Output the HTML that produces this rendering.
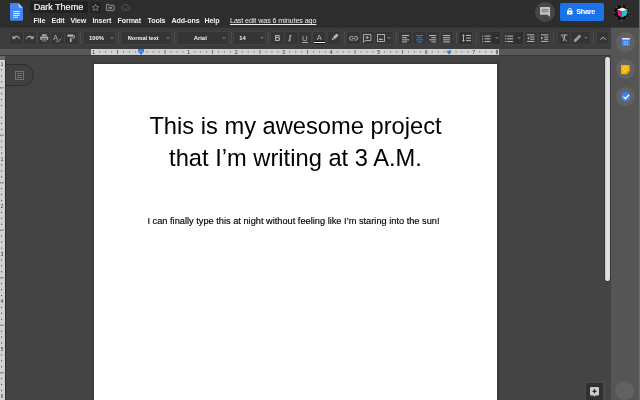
<!DOCTYPE html>
<html>
<head>
<meta charset="utf-8">
<title>Dark Theme</title>
<style>
*{box-sizing:border-box;margin:0;padding:0}
html,body{width:640px;height:400px;overflow:hidden;background:#444;font-family:"Liberation Sans",sans-serif;}
#app{will-change:transform;position:relative;width:640px;height:400px;overflow:hidden;background:#444}
.abs{position:absolute}
svg{overflow:visible}
#header{left:0;top:0;width:640px;height:27.6px;background:#2d2d2d}
#toolbar{left:0;top:28px;width:611px;height:20.5px;box-shadow:0 -0.4px 0 #3c3c3c;background:#3c3c3c}
#rulerrow{left:0;top:48.5px;width:611px;height:7.3px;background:#585858;border-bottom:0.8px solid #383838}
#ruler{left:91px;top:49.2px;width:407.8px;height:5.5px;background:#d2d2d2}
#vruler{left:0;top:60px;width:5.6px;height:340px;background:#d2d2d2;border-right:0.8px solid #2a2a2a}
#vrulertop{left:0;top:55.5px;width:5px;height:4.5px;background:#6a6a6a}
#sidebar{left:611px;top:28px;width:29px;height:372px;box-shadow:0 -0.4px 0 #555;background:#555}
#orange{left:638.8px;top:0;width:1.2px;height:400px;background:#b8570f}
#page{left:94px;top:64px;width:403px;height:336px;background:#fff;box-shadow:0 0 0 1px #3a3a3a,0 0 2px 1.5px rgba(40,40,40,.5)}
#title{left:30px;top:1px;width:57.6px;height:12px;background:#212121;border-radius:1.5px}
#title span{position:absolute;left:3.8px;top:0.7px;font-size:9.1px;line-height:11px;color:#f4f4f4;white-space:nowrap;letter-spacing:-0.05px;-webkit-text-stroke:0.2px #f4f4f4}
.menu{top:17.3px;font-size:7.1px;line-height:8px;color:#f0f0f0;white-space:nowrap;font-weight:bold;letter-spacing:-0.1px}
.tb{top:3.5px;height:12.5px;background:#353535;box-shadow:0 0 0 0.5px #464646;border-radius:1px}
.tbt{font-size:5.9px;font-weight:bold;color:#f0f0f0;white-space:nowrap;line-height:8px;top:5.7px}
.sep{top:4px;width:0.8px;height:11.5px;background:#4c4c4c}
.circ{border-radius:50%}
h1{position:absolute;left:0;width:403px;text-align:center;font-weight:normal;font-size:23.7px;line-height:32px;color:#000;white-space:nowrap}
#body{position:absolute;width:1612px;text-align:center;font-size:36.95px;line-height:48px;color:#000;white-space:nowrap;top:151px;left:-2.3px;transform:scale(0.25);transform-origin:0 0;-webkit-text-stroke:0.6px #000}
</style>
</head>
<body>
<div id="app">
  <div id="header" class="abs">
    <svg class="abs" style="left:10px;top:3.100px" width="13" height="17.800" viewBox="0 0 13.500 18" preserveAspectRatio="none">
      <path d="M1.300 0h7.500l4.700 4.700V16.700a1.300 1.300 0 0 1-1.300 1.300H1.300A1.300 1.300 0 0 1 0 16.700V1.300A1.300 1.300 0 0 1 1.300 0z" fill="#4285f4"/>
      <path d="M8.800 0l4.700 4.700H9.900a1.100 1.100 0 0 1-1.100-1.100z" fill="#a6c5fa"/>
      <rect x="3.300" y="8.200" width="6.900" height="0.950" fill="#f4f4f4"/>
      <rect x="3.300" y="10.100" width="6.900" height="0.950" fill="#f4f4f4"/>
      <rect x="3.300" y="12" width="6.900" height="0.950" fill="#f4f4f4"/>
      <rect x="3.300" y="13.900" width="4.900" height="0.950" fill="#f4f4f4"/>
    </svg>
    <div id="title" class="abs"><span>Dark Theme</span></div>
    <div class="abs" style="left:89.800px;top:1.800px;width:11.200px;height:11.400px;background:#242424;border-radius:1.500px"></div>
    <svg class="abs" style="left:91px;top:2.900px" width="9" height="9" viewBox="0 0 24 24"><path d="M12 3.500l2.600 5.600 6.100 0.700-4.500 4.200 1.200 6-5.400-3-5.400 3 1.200-6L3.300 9.800l6.100-0.700z" fill="none" stroke="#8a8a8a" stroke-width="2.200" stroke-linejoin="round"/></svg>
    <svg class="abs" style="left:105.800px;top:3.600px" width="8.500" height="7" viewBox="0 0 17 14"><path d="M1.800 0.800h4.800l1.600 1.800h7a1 1 0 0 1 1 1v8.600a1 1 0 0 1-1 1H1.800a1 1 0 0 1-1-1V1.800a1 1 0 0 1 1-1z" fill="#3a3a3a" stroke="#9a9a9a" stroke-width="1.700"/><path d="M9 5.200l3.400 2.600L9 10.400zM4.600 7h4.600v1.700H4.600z" fill="#b0b0b0"/></svg>
    <svg class="abs" style="left:120.500px;top:3.800px" width="9.500" height="6.500" viewBox="0 0 19 13"><path d="M5 12.200a4 4 0 0 1-0.600-7.950A5.300 5.300 0 0 1 14.600 5.300 3.500 3.500 0 0 1 14.800 12.200z" fill="none" stroke="#5c5c5c" stroke-width="1.700"/><path d="M7 8.500l2 1.800 3.200-3.400" fill="none" stroke="#5c5c5c" stroke-width="1.400"/></svg>
    <div class="menu abs" style="left:33.500px">File</div>
    <div class="menu abs" style="left:51.500px">Edit</div>
    <div class="menu abs" style="left:70.500px">View</div>
    <div class="menu abs" style="left:92.500px">Insert</div>
    <div class="menu abs" style="left:117.500px">Format</div>
    <div class="menu abs" style="left:147.500px">Tools</div>
    <div class="menu abs" style="left:171.500px">Add-ons</div>
    <div class="menu abs" style="left:204.500px">Help</div>
    <div class="menu abs" style="left:230px;text-decoration:underline;font-weight:normal;font-size:7.200px">Last edit was 6 minutes ago</div>
    <!-- comment button -->
    <div class="abs circ" style="left:535px;top:2px;width:20px;height:20px;background:#474747"></div>
    <svg class="abs" style="left:540px;top:7.200px" width="10" height="10" viewBox="0 0 10 10"><path d="M0.800 0h8.400a0.800 0.800 0 0 1 0.800 0.800V10L7.600 7.700H0.800A0.800 0.800 0 0 1 0 6.900V0.800A0.800 0.800 0 0 1 0.800 0z" fill="#c9c5bd"/><rect x="1.700" y="2.300" width="6.600" height="0.900" fill="#6a6660"/><rect x="1.700" y="4.300" width="6.600" height="0.900" fill="#6a6660"/><rect x="1.700" y="3.200" width="6.600" height="1.100" fill="#a29e97"/></svg>
    <!-- share button -->
    <div class="abs" style="left:559.700px;top:3px;width:44.500px;height:18px;background:#1a73e8;border-radius:2px"></div>
    <svg class="abs" style="left:566.800px;top:8.300px" width="5.600" height="6.600" viewBox="0 0 5.600 6.600"><rect x="0" y="2.500" width="5.600" height="4.100" rx="0.600" fill="#fff"/><path d="M1.300 2.800V1.800a1.500 1.500 0 0 1 3 0v1" fill="none" stroke="#fff" stroke-width="0.900"/><circle cx="2.800" cy="4.600" r="0.700" fill="#1a73e8"/></svg>
    <div class="abs" style="left:576.300px;top:7.300px;font-size:7.300px;font-weight:bold;color:#fff;line-height:9px;letter-spacing:-0.300px;white-space:nowrap">Share</div>
    <!-- avatar -->
    <div class="abs circ" style="left:613.500px;top:4.500px;width:15.600px;height:15.600px;background:#0c0c0c"></div>
    <svg class="abs" style="left:613.500px;top:4.500px" width="15.600" height="15.600" viewBox="0 0 15.600 15.600">
      <g fill="#e8e8e8"><circle cx="7.800" cy="0.700" r="0.500"/><circle cx="7.800" cy="14.900" r="0.500"/><circle cx="0.700" cy="7.800" r="0.500"/><circle cx="14.900" cy="7.800" r="0.500"/><circle cx="2.800" cy="2.800" r="0.450"/><circle cx="12.800" cy="2.800" r="0.450"/><circle cx="2.800" cy="12.800" r="0.450"/><circle cx="12.800" cy="12.800" r="0.450"/></g>
      <path d="M3.200 4.400L8.400 2.400 13.400 4.800 8.200 6.800z" fill="#f2f2f2"/>
      <path d="M2.900 4.500L8.200 6.700 7.600 12.600 4.200 10.200z" fill="#e0197c"/>
      <path d="M8.200 6.700L13.900 4.900 12.500 10.200 7.600 12.600z" fill="#1fc7d6"/>
    </svg>
  </div>
  <div id="toolbar" class="abs">
    <div class="tb abs" style="left:10px;width:12.5px;"></div>
    <div class="tb abs" style="left:23.75px;width:12.5px;"></div>
    <div class="tb abs" style="left:37.5px;width:12.5px;"></div>
    <div class="tb abs" style="left:51.25px;width:12.5px;"></div>
    <div class="tb abs" style="left:65px;width:12.5px;"></div>
    <svg class="abs" style="left:12.2px;top:6.8px" width="8" height="6" viewBox="0 0 8 6"><path d="M0.6 0.8v3h3L2.5 2.7C3.3 2.1 4.2 1.9 5 2c1.300.2 2.200 1 2.600 2.300l0.400-0.200C7.600 2.200 6.300 1 4.800 0.900 3.600 0.800 2.500 1.200 1.700 1.900z" fill="#b4b4b4" stroke="#b4b4b4" stroke-width="0.250"/></svg>
    <svg class="abs" style="left:25.95px;top:6.8px" width="8" height="6" viewBox="0 0 8 6"><g transform="translate(8,0) scale(-1,1)"><path d="M0.6 0.8v3h3L2.5 2.7C3.3 2.1 4.2 1.9 5 2c1.300.2 2.200 1 2.600 2.300l0.400-0.200C7.600 2.200 6.300 1 4.800 0.900 3.600 0.800 2.500 1.200 1.700 1.900z" fill="#b4b4b4" stroke="#b4b4b4" stroke-width="0.250"/></g></svg>
    <svg class="abs" style="left:39.5px;top:5.8px" width="8.5" height="8" viewBox="0 0 8.5 8"><rect x="2" y="0.300" width="4.500" height="1.600" fill="#b4b4b4"/><rect x="0.300" y="2.400" width="7.900" height="3.600" rx="0.800" fill="#b4b4b4"/><rect x="2" y="4.600" width="4.500" height="3" fill="#b4b4b4" stroke="#343434" stroke-width="0.600"/><rect x="2.600" y="5.300" width="3.300" height="1.600" fill="#555"/></svg>
    <svg class="abs" style="left:53.3px;top:5.6px" width="9" height="8.5" viewBox="0 0 9 8.5"><text x="0.300" y="5.600" font-family="Liberation Sans, sans-serif" font-size="7" fill="#b4b4b4">A</text><path d="M3.200 6.600l1.500 1.400 3.200-3.300" fill="none" stroke="#b4b4b4" stroke-width="0.900"/></svg>
    <svg class="abs" style="left:67.3px;top:5.8px" width="8" height="8.5" viewBox="0 0 8 8.5"><rect x="0.400" y="0.400" width="5.800" height="2.400" rx="0.400" fill="#b4b4b4"/><path d="M6.200 1.500h1.200v2.600H3.700v1.200" fill="none" stroke="#b4b4b4" stroke-width="0.800"/><rect x="2.900" y="4.800" width="1.700" height="3.200" fill="#b4b4b4"/></svg>
    <div class="sep abs" style="left:80px"></div>
    <div class="tb abs" style="left:83.75px;width:31px;"></div>
    <div class="tbt abs" style="left:89px">100%</div>
    <svg class="abs" style="left:109.5px;top:8.6px" width="4" height="2.2" viewBox="0 0 4 2.2"><path d="M0 0h4L2 2.2z" fill="#6c6c6c"/></svg>
    <div class="sep abs" style="left:117.5px"></div>
    <div class="tb abs" style="left:120.6px;width:50.6px;"></div>
    <div class="tbt abs" style="left:127.700px;font-size:5.650px">Normal text</div>
    <svg class="abs" style="left:165.5px;top:8.6px" width="4" height="2.2" viewBox="0 0 4 2.2"><path d="M0 0h4L2 2.2z" fill="#6c6c6c"/></svg>
    <div class="sep abs" style="left:174.2px"></div>
    <div class="tb abs" style="left:177.5px;width:50.2px;"></div>
    <div class="tbt abs" style="left:193.700px">Arial</div>
    <svg class="abs" style="left:222.4px;top:8.6px" width="4" height="2.2" viewBox="0 0 4 2.2"><path d="M0 0h4L2 2.2z" fill="#6c6c6c"/></svg>
    <div class="sep abs" style="left:231px"></div>
    <div class="tb abs" style="left:233.75px;width:31.2px;"></div>
    <div class="tbt abs" style="left:239.300px">14</div>
    <svg class="abs" style="left:259.9px;top:8.6px" width="4" height="2.2" viewBox="0 0 4 2.2"><path d="M0 0h4L2 2.2z" fill="#6c6c6c"/></svg>
    <div class="sep abs" style="left:268px"></div>
    <div class="tb abs" style="left:271.25px;width:12.5px;"></div>
    <div class="tb abs" style="left:285px;width:12.5px;"></div>
    <div class="tb abs" style="left:298.75px;width:12.5px;"></div>
    <div class="tb abs" style="left:312.5px;width:12.5px;"></div>
    <div class="tb abs" style="left:327.5px;width:12.5px;"></div>
    <div class="abs" style="left:274.600px;top:6px;font-size:8.400px;font-weight:bold;color:#b4b4b4;line-height:9px">B</div>
    <div class="abs" style="left:288.200px;top:5.800px;font-size:9.200px;font-style:italic;font-family:'Liberation Serif',serif;font-weight:normal;-webkit-text-stroke:0.250px #b4b4b4;color:#b4b4b4;line-height:9px">I</div>
    <div class="abs" style="left:302px;top:5.800px;font-size:8px;color:#b4b4b4;line-height:9px">U</div>
    <div class="abs" style="left:302.200px;top:13.600px;width:5.600px;height:0.800px;background:#b4b4b4"></div>
    <div class="abs" style="left:316.800px;top:4.600px;font-size:7.600px;color:#b4b4b4;line-height:9px">A</div>
    <div class="abs" style="left:314px;top:12.800px;width:11px;height:3.500px;background:#fff;border-top:0.700px solid #111;border-bottom:0.300px solid #111"></div>
    <svg class="abs" style="left:330.6px;top:5.4px" width="8" height="8" viewBox="0 0 8 8"><path d="M5.600 0.400l2 2L3.800 6.200l-2-2z" fill="#b4b4b4"/><path d="M1.400 4.800l1.800 1.800-2.500 0.700z" fill="#b4b4b4"/></svg>
    <div class="sep abs" style="left:344px"></div>
    <div class="tb abs" style="left:347.25px;width:12.5px;"></div>
    <svg class="abs" style="left:349px;top:7.6px" width="9.2" height="4.6" viewBox="0 0 9.2 4.6"><path d="M3.900 0.500H2.300a1.800 1.800 0 0 0 0 3.600h1.600M5.300 0.500h1.600a1.800 1.800 0 0 1 0 3.600H5.300" fill="none" stroke="#b4b4b4" stroke-width="0.950"/><rect x="2.800" y="1.850" width="3.600" height="0.900" fill="#b4b4b4"/></svg>
    <div class="tb abs" style="left:361.25px;width:12.5px;"></div>
    <svg class="abs" style="left:363.4px;top:5.6px" width="8.5" height="9" viewBox="0 0 8.5 9"><path d="M0.500 0.500h7.400v6H2.400L0.500 8.300z" fill="none" stroke="#b4b4b4" stroke-width="0.900"/><path d="M4.200 1.900v3.200M2.600 3.500h3.200" stroke="#b4b4b4" stroke-width="0.900"/></svg>
    <div class="tb abs" style="left:375.25px;width:17.5px;"></div>
    <svg class="abs" style="left:377.3px;top:5.8px" width="8" height="8" viewBox="0 0 8 8"><rect x="0.500" y="0.500" width="7" height="7" fill="none" stroke="#b4b4b4" stroke-width="0.900"/><path d="M1.600 6l1.500-1.900 1 1.200 0.900-0.700 1.400 1.400z" fill="#b4b4b4"/></svg>
    <svg class="abs" style="left:387.4px;top:8.6px" width="4" height="2.2" viewBox="0 0 4 2.2"><path d="M0 0h4L2 2.2z" fill="#6c6c6c"/></svg>
    <div class="sep abs" style="left:396.2px"></div>
    <div class="tb abs" style="left:399.4px;width:12.5px;"></div>
    <div class="tb abs" style="left:413.1px;width:12.5px;"></div>
    <div class="tb abs" style="left:426.8px;width:12.5px;"></div>
    <div class="tb abs" style="left:440.5px;width:12.5px;"></div>
    <svg class="abs" style="left:401.9px;top:6.7px" width="7.5" height="8" viewBox="0 0 7.5 8"><rect x="0" y="0.0" width="7.2" height="1.050" fill="#b4b4b4"/><rect x="0" y="2.15" width="5" height="1.050" fill="#b4b4b4"/><rect x="0" y="4.3" width="7.2" height="1.050" fill="#b4b4b4"/><rect x="0" y="6.449999999999999" width="5" height="1.050" fill="#b4b4b4"/></svg>
    <svg class="abs" style="left:415.6px;top:6.7px" width="7.5" height="8" viewBox="0 0 7.5 8"><rect x="0" y="0.0" width="7.2" height="1.050" fill="#2a7de8"/><rect x="1.3" y="2.15" width="4.6" height="1.050" fill="#2a7de8"/><rect x="0" y="4.3" width="7.2" height="1.050" fill="#2a7de8"/><rect x="1.3" y="6.449999999999999" width="4.6" height="1.050" fill="#2a7de8"/></svg>
    <svg class="abs" style="left:429.3px;top:6.7px" width="7.5" height="8" viewBox="0 0 7.5 8"><rect x="0" y="0.0" width="7.2" height="1.050" fill="#b4b4b4"/><rect x="2.2" y="2.15" width="5" height="1.050" fill="#b4b4b4"/><rect x="0" y="4.3" width="7.2" height="1.050" fill="#b4b4b4"/><rect x="2.2" y="6.449999999999999" width="5" height="1.050" fill="#b4b4b4"/></svg>
    <svg class="abs" style="left:443px;top:6.7px" width="7.5" height="8" viewBox="0 0 7.5 8"><rect x="0" y="0.0" width="7.2" height="1.050" fill="#b4b4b4"/><rect x="0" y="2.15" width="7.2" height="1.050" fill="#b4b4b4"/><rect x="0" y="4.3" width="7.2" height="1.050" fill="#b4b4b4"/><rect x="0" y="6.449999999999999" width="7.2" height="1.050" fill="#b4b4b4"/></svg>
    <div class="sep abs" style="left:456.3px"></div>
    <div class="tb abs" style="left:459.4px;width:13px;background:#2f2f2f;"></div>
    <svg class="abs" style="left:461.6px;top:6.2px" width="9" height="8.5" viewBox="0 0 9 8.5"><path d="M1.500 0l1.500 1.800H2v4.400h1L1.500 8 0 6.200h1V1.800H0z" fill="#b4b4b4"/><rect x="4" y="0.900" width="5" height="1.050" fill="#b4b4b4"/><rect x="4" y="3.500" width="5" height="1.050" fill="#b4b4b4"/><rect x="4" y="6.100" width="5" height="1.050" fill="#b4b4b4"/></svg>
    <div class="sep abs" style="left:476.2px"></div>
    <div class="tb abs" style="left:480px;width:20px;"></div>
    <div class="abs" style="left:492px;top:3.500px;width:8px;height:12.500px;background:#2f2f2f"></div>
    <svg class="abs" style="left:482.3px;top:6.6px" width="9" height="8" viewBox="0 0 9 8"><rect x="0.200" y="0.200" width="0.900" height="1.800" fill="#999"/><rect x="0.200" y="2.900" width="0.900" height="1.800" fill="#999"/><rect x="0.200" y="5.600" width="0.900" height="1.800" fill="#999"/><rect x="2.500" y="0.600" width="5.800" height="1.050" fill="#b4b4b4"/><rect x="2.500" y="3.300" width="5.800" height="1.050" fill="#b4b4b4"/><rect x="2.500" y="6" width="5.800" height="1.050" fill="#b4b4b4"/></svg>
    <svg class="abs" style="left:494.5px;top:8.6px" width="4" height="2.2" viewBox="0 0 4 2.2"><path d="M0 0h4L2 2.2z" fill="#6c6c6c"/></svg>
    <div class="tb abs" style="left:502.75px;width:19.75px;"></div>
    <div class="abs" style="left:514.500px;top:3.500px;width:8px;height:12.500px;background:#2f2f2f"></div>
    <svg class="abs" style="left:505px;top:6.6px" width="9" height="8" viewBox="0 0 9 8"><rect x="0" y="0.500" width="1.300" height="1.200" fill="#aaa"/><rect x="0" y="3.200" width="1.300" height="1.200" fill="#aaa"/><rect x="0" y="5.900" width="1.300" height="1.200" fill="#aaa"/><rect x="2.200" y="0.600" width="5.800" height="1.050" fill="#b4b4b4"/><rect x="2.200" y="3.300" width="5.800" height="1.050" fill="#b4b4b4"/><rect x="2.200" y="6" width="5.800" height="1.050" fill="#b4b4b4"/></svg>
    <svg class="abs" style="left:517px;top:8.6px" width="4" height="2.2" viewBox="0 0 4 2.2"><path d="M0 0h4L2 2.2z" fill="#6c6c6c"/></svg>
    <div class="tb abs" style="left:525px;width:11.5px;"></div>
    <svg class="abs" style="left:527px;top:6.3px" width="8" height="8.5" viewBox="0 0 8 8.5"><rect x="0" y="0.300" width="7.400" height="1.050" fill="#b4b4b4"/><rect x="3.200" y="2.500" width="4.200" height="1.050" fill="#b4b4b4"/><rect x="3.200" y="4.700" width="4.200" height="1.050" fill="#b4b4b4"/><rect x="0" y="6.900" width="7.400" height="1.050" fill="#b4b4b4"/><path d="M2.200 2.500v3.200L0.200 4.100z" fill="#b4b4b4"/></svg>
    <div class="tb abs" style="left:538.75px;width:11.5px;"></div>
    <svg class="abs" style="left:540.8px;top:6.3px" width="8" height="8.5" viewBox="0 0 8 8.5"><rect x="0" y="0.300" width="7.400" height="1.050" fill="#b4b4b4"/><rect x="3.200" y="2.500" width="4.200" height="1.050" fill="#b4b4b4"/><rect x="3.200" y="4.700" width="4.200" height="1.050" fill="#b4b4b4"/><rect x="0" y="6.900" width="7.400" height="1.050" fill="#b4b4b4"/><path d="M0.200 2.500v3.200L2.200 4.100z" fill="#b4b4b4"/></svg>
    <div class="sep abs" style="left:553px"></div>
    <div class="tb abs" style="left:557.5px;width:12.5px;"></div>
    <svg class="abs" style="left:559.8px;top:5.8px" width="8" height="8.5" viewBox="0 0 8 8.5"><path d="M1.800 1h5.600M4.900 1L3.600 7" stroke="#b4b4b4" stroke-width="1" fill="none"/><path d="M0.800 1.200l6 6" stroke="#b4b4b4" stroke-width="0.900"/></svg>
    <div class="tb abs" style="left:571.25px;width:18.75px;"></div>
    <svg class="abs" style="left:573.3px;top:5.6px" width="9" height="9" viewBox="0 0 9 9"><path d="M6.400 0.600l1.800 1.800-5 5-2.400 0.700 0.600-2.500z" fill="#a4a4a4"/><path d="M5.200 2.600l1.200 1.200M3.600 4.200l1.200 1.200" stroke="#555" stroke-width="0.500"/></svg>
    <svg class="abs" style="left:584px;top:8.6px" width="4" height="2.2" viewBox="0 0 4 2.2"><path d="M0 0h4L2 2.2z" fill="#6c6c6c"/></svg>
    <div class="sep abs" style="left:593px"></div>
    <div class="tb abs" style="left:596.8px;width:11.5px;"></div>
    <svg class="abs" style="left:599.5px;top:7.5px" width="6.5" height="4.5" viewBox="0 0 6.5 4.5"><path d="M0.500 3.800L3.200 1l2.700 2.800" fill="none" stroke="#b4b4b4" stroke-width="1"/></svg>
  </div>
  <div id="rulerrow" class="abs"></div>
  <div id="ruler" class="abs"><svg class="abs" style="left:0;top:0" width="408" height="6" viewBox="0 0 408 6"><text x="2.80" y="4.500" font-size="5.200" text-anchor="middle" fill="#333" font-family="Liberation Sans, sans-serif">1</text><rect x="8.29" y="1.700" width="0.900" height="2.200" fill="#909090"/><rect x="14.23" y="1.700" width="0.900" height="2.200" fill="#909090"/><rect x="20.16" y="1.700" width="0.900" height="2.200" fill="#909090"/><rect x="26.15" y="0.900" width="0.800" height="3.800" fill="#555"/><rect x="32.04" y="1.700" width="0.900" height="2.200" fill="#909090"/><rect x="37.98" y="1.700" width="0.900" height="2.200" fill="#909090"/><rect x="43.91" y="1.700" width="0.900" height="2.200" fill="#909090"/><rect x="55.79" y="1.700" width="0.900" height="2.200" fill="#909090"/><rect x="61.73" y="1.700" width="0.900" height="2.200" fill="#909090"/><rect x="67.66" y="1.700" width="0.900" height="2.200" fill="#909090"/><rect x="73.65" y="0.900" width="0.800" height="3.800" fill="#555"/><rect x="79.54" y="1.700" width="0.900" height="2.200" fill="#909090"/><rect x="85.48" y="1.700" width="0.900" height="2.200" fill="#909090"/><rect x="91.41" y="1.700" width="0.900" height="2.200" fill="#909090"/><text x="97.80" y="4.500" font-size="5.200" text-anchor="middle" fill="#333" font-family="Liberation Sans, sans-serif">1</text><rect x="103.29" y="1.700" width="0.900" height="2.200" fill="#909090"/><rect x="109.23" y="1.700" width="0.900" height="2.200" fill="#909090"/><rect x="115.16" y="1.700" width="0.900" height="2.200" fill="#909090"/><rect x="121.15" y="0.900" width="0.800" height="3.800" fill="#555"/><rect x="127.04" y="1.700" width="0.900" height="2.200" fill="#909090"/><rect x="132.98" y="1.700" width="0.900" height="2.200" fill="#909090"/><rect x="138.91" y="1.700" width="0.900" height="2.200" fill="#909090"/><text x="145.30" y="4.500" font-size="5.200" text-anchor="middle" fill="#333" font-family="Liberation Sans, sans-serif">2</text><rect x="150.79" y="1.700" width="0.900" height="2.200" fill="#909090"/><rect x="156.73" y="1.700" width="0.900" height="2.200" fill="#909090"/><rect x="162.66" y="1.700" width="0.900" height="2.200" fill="#909090"/><rect x="168.65" y="0.900" width="0.800" height="3.800" fill="#555"/><rect x="174.54" y="1.700" width="0.900" height="2.200" fill="#909090"/><rect x="180.48" y="1.700" width="0.900" height="2.200" fill="#909090"/><rect x="186.41" y="1.700" width="0.900" height="2.200" fill="#909090"/><text x="192.80" y="4.500" font-size="5.200" text-anchor="middle" fill="#333" font-family="Liberation Sans, sans-serif">3</text><rect x="198.29" y="1.700" width="0.900" height="2.200" fill="#909090"/><rect x="204.23" y="1.700" width="0.900" height="2.200" fill="#909090"/><rect x="210.16" y="1.700" width="0.900" height="2.200" fill="#909090"/><rect x="216.15" y="0.900" width="0.800" height="3.800" fill="#555"/><rect x="222.04" y="1.700" width="0.900" height="2.200" fill="#909090"/><rect x="227.98" y="1.700" width="0.900" height="2.200" fill="#909090"/><rect x="233.91" y="1.700" width="0.900" height="2.200" fill="#909090"/><text x="240.30" y="4.500" font-size="5.200" text-anchor="middle" fill="#333" font-family="Liberation Sans, sans-serif">4</text><rect x="245.79" y="1.700" width="0.900" height="2.200" fill="#909090"/><rect x="251.73" y="1.700" width="0.900" height="2.200" fill="#909090"/><rect x="257.66" y="1.700" width="0.900" height="2.200" fill="#909090"/><rect x="263.65" y="0.900" width="0.800" height="3.800" fill="#555"/><rect x="269.54" y="1.700" width="0.900" height="2.200" fill="#909090"/><rect x="275.48" y="1.700" width="0.900" height="2.200" fill="#909090"/><rect x="281.41" y="1.700" width="0.900" height="2.200" fill="#909090"/><text x="287.80" y="4.500" font-size="5.200" text-anchor="middle" fill="#333" font-family="Liberation Sans, sans-serif">5</text><rect x="293.29" y="1.700" width="0.900" height="2.200" fill="#909090"/><rect x="299.23" y="1.700" width="0.900" height="2.200" fill="#909090"/><rect x="305.16" y="1.700" width="0.900" height="2.200" fill="#909090"/><rect x="311.15" y="0.900" width="0.800" height="3.800" fill="#555"/><rect x="317.04" y="1.700" width="0.900" height="2.200" fill="#909090"/><rect x="322.98" y="1.700" width="0.900" height="2.200" fill="#909090"/><rect x="328.91" y="1.700" width="0.900" height="2.200" fill="#909090"/><text x="335.30" y="4.500" font-size="5.200" text-anchor="middle" fill="#333" font-family="Liberation Sans, sans-serif">6</text><rect x="340.79" y="1.700" width="0.900" height="2.200" fill="#909090"/><rect x="346.73" y="1.700" width="0.900" height="2.200" fill="#909090"/><rect x="352.66" y="1.700" width="0.900" height="2.200" fill="#909090"/><rect x="358.65" y="0.900" width="0.800" height="3.800" fill="#555"/><rect x="364.54" y="1.700" width="0.900" height="2.200" fill="#909090"/><rect x="370.48" y="1.700" width="0.900" height="2.200" fill="#909090"/><rect x="376.41" y="1.700" width="0.900" height="2.200" fill="#909090"/><text x="382.80" y="4.500" font-size="5.200" text-anchor="middle" fill="#333" font-family="Liberation Sans, sans-serif">7</text><rect x="388.29" y="1.700" width="0.900" height="2.200" fill="#909090"/><rect x="394.23" y="1.700" width="0.900" height="2.200" fill="#909090"/><rect x="400.16" y="1.700" width="0.900" height="2.200" fill="#909090"/><rect x="406.15" y="0.900" width="0.800" height="3.800" fill="#555"/><rect x="405.400" y="0.800" width="0.800" height="4.600" fill="#444"/></svg><svg class="abs" style="left:47.30000000000001px;top:-0.2px" width="6" height="6" viewBox="0 0 6 6"><path d="M0 0h6v2.600L3 6 0 2.600z" fill="#2b7de9"/><rect x="1.200" y="1.900" width="3.600" height="0.600" fill="#7fb2f5"/></svg><svg class="abs" style="left:355.3px;top:-0.2px" width="6" height="6" viewBox="0 0 6 6"><path d="M0.300 1.800h5.400L3 5.800z" fill="#2b7de9"/></svg></div>
  <!-- outline pill -->
  <div class="abs" style="left:-12px;top:64px;width:46px;height:21.500px;border-radius:10.750px;background:#404040;border:0.800px solid #2c2c2c"></div>
  <svg class="abs" style="left:15px;top:71px" width="9" height="9" viewBox="0 0 9 9"><rect x="0.400" y="0.400" width="8.200" height="8.200" fill="none" stroke="#7e7e7e" stroke-width="0.800"/><rect x="2" y="2.200" width="5" height="0.800" fill="#7e7e7e"/><rect x="2" y="4.100" width="5" height="0.800" fill="#7e7e7e"/><rect x="2" y="6" width="5" height="0.800" fill="#7e7e7e"/></svg>
  <div id="vrulertop" class="abs"></div>
  <div id="vruler" class="abs"><svg class="abs" style="left:0;top:0" width="5" height="340" viewBox="0 0 5 340"><text x="2" y="5.60" font-size="4.600" text-anchor="middle" fill="#333" font-family="Liberation Sans, sans-serif">1</text><rect x="1" y="9.44" width="1.100" height="1" fill="#4a4a4a"/><rect x="1" y="15.38" width="1.100" height="1" fill="#4a4a4a"/><rect x="1" y="21.31" width="1.100" height="1" fill="#4a4a4a"/><rect x="0" y="27.10" width="3.800" height="1.300" fill="#8a8a8a"/><rect x="1" y="33.19" width="1.100" height="1" fill="#4a4a4a"/><rect x="1" y="39.12" width="1.100" height="1" fill="#4a4a4a"/><rect x="1" y="45.06" width="1.100" height="1" fill="#4a4a4a"/><rect x="1" y="56.94" width="1.100" height="1" fill="#4a4a4a"/><rect x="1" y="62.88" width="1.100" height="1" fill="#4a4a4a"/><rect x="1" y="68.81" width="1.100" height="1" fill="#4a4a4a"/><rect x="0" y="74.60" width="3.800" height="1.300" fill="#8a8a8a"/><rect x="1" y="80.69" width="1.100" height="1" fill="#4a4a4a"/><rect x="1" y="86.62" width="1.100" height="1" fill="#4a4a4a"/><rect x="1" y="92.56" width="1.100" height="1" fill="#4a4a4a"/><text x="2" y="100.60" font-size="4.600" text-anchor="middle" fill="#333" font-family="Liberation Sans, sans-serif">1</text><rect x="1" y="104.44" width="1.100" height="1" fill="#4a4a4a"/><rect x="1" y="110.38" width="1.100" height="1" fill="#4a4a4a"/><rect x="1" y="116.31" width="1.100" height="1" fill="#4a4a4a"/><rect x="0" y="122.10" width="3.800" height="1.300" fill="#8a8a8a"/><rect x="1" y="128.19" width="1.100" height="1" fill="#4a4a4a"/><rect x="1" y="134.12" width="1.100" height="1" fill="#4a4a4a"/><rect x="1" y="140.06" width="1.100" height="1" fill="#4a4a4a"/><text x="2" y="148.10" font-size="4.600" text-anchor="middle" fill="#333" font-family="Liberation Sans, sans-serif">2</text><rect x="1" y="151.94" width="1.100" height="1" fill="#4a4a4a"/><rect x="1" y="157.88" width="1.100" height="1" fill="#4a4a4a"/><rect x="1" y="163.81" width="1.100" height="1" fill="#4a4a4a"/><rect x="0" y="169.60" width="3.800" height="1.300" fill="#8a8a8a"/><rect x="1" y="175.69" width="1.100" height="1" fill="#4a4a4a"/><rect x="1" y="181.62" width="1.100" height="1" fill="#4a4a4a"/><rect x="1" y="187.56" width="1.100" height="1" fill="#4a4a4a"/><text x="2" y="195.60" font-size="4.600" text-anchor="middle" fill="#333" font-family="Liberation Sans, sans-serif">3</text><rect x="1" y="199.44" width="1.100" height="1" fill="#4a4a4a"/><rect x="1" y="205.38" width="1.100" height="1" fill="#4a4a4a"/><rect x="1" y="211.31" width="1.100" height="1" fill="#4a4a4a"/><rect x="0" y="217.10" width="3.800" height="1.300" fill="#8a8a8a"/><rect x="1" y="223.19" width="1.100" height="1" fill="#4a4a4a"/><rect x="1" y="229.12" width="1.100" height="1" fill="#4a4a4a"/><rect x="1" y="235.06" width="1.100" height="1" fill="#4a4a4a"/><text x="2" y="243.10" font-size="4.600" text-anchor="middle" fill="#333" font-family="Liberation Sans, sans-serif">4</text><rect x="1" y="246.94" width="1.100" height="1" fill="#4a4a4a"/><rect x="1" y="252.88" width="1.100" height="1" fill="#4a4a4a"/><rect x="1" y="258.81" width="1.100" height="1" fill="#4a4a4a"/><rect x="0" y="264.60" width="3.800" height="1.300" fill="#8a8a8a"/><rect x="1" y="270.69" width="1.100" height="1" fill="#4a4a4a"/><rect x="1" y="276.62" width="1.100" height="1" fill="#4a4a4a"/><rect x="1" y="282.56" width="1.100" height="1" fill="#4a4a4a"/><text x="2" y="290.60" font-size="4.600" text-anchor="middle" fill="#333" font-family="Liberation Sans, sans-serif">5</text><rect x="1" y="294.44" width="1.100" height="1" fill="#4a4a4a"/><rect x="1" y="300.38" width="1.100" height="1" fill="#4a4a4a"/><rect x="1" y="306.31" width="1.100" height="1" fill="#4a4a4a"/><rect x="0" y="312.10" width="3.800" height="1.300" fill="#8a8a8a"/><rect x="1" y="318.19" width="1.100" height="1" fill="#4a4a4a"/><rect x="1" y="324.12" width="1.100" height="1" fill="#4a4a4a"/><rect x="1" y="330.06" width="1.100" height="1" fill="#4a4a4a"/><text x="2" y="338.10" font-size="4.600" text-anchor="middle" fill="#333" font-family="Liberation Sans, sans-serif">6</text></svg></div>
  <div id="page" class="abs">
    <h1 style="top:46px">This is my awesome project</h1>
    <h1 style="top:78px">that I’m writing at 3 A.M.</h1>
    <div id="body">I can finally type this at night without feeling like I’m staring into the sun!</div>
  </div>
  <!-- scrollbar -->
  <div class="abs" style="left:605px;top:57.300px;width:4.600px;height:224px;border-radius:2.300px;background:linear-gradient(90deg,#c4c4c8,#e6e6ea 45%,#d8d8dc);box-shadow:0 0 0 0.600px #303030"></div>
  <!-- explore button -->
  <div class="abs" style="left:586px;top:383.200px;width:17px;height:17px;background:#303030;box-shadow:0 0 3px 1.500px rgba(90,90,90,.45)"></div>
  <svg class="abs" style="left:590.200px;top:387.300px" width="9" height="10" viewBox="0 0 9 10"><path d="M1 0h7a1 1 0 0 1 1 1v6.600a1 1 0 0 1-1 1H5.500L4.500 9.700 3.500 8.600H1a1 1 0 0 1-1-1V1a1 1 0 0 1 1-1z" fill="#cbcbcb"/><path d="M4.500 1.600l0.800 1.900 1.900 0.800-1.900 0.800-0.800 1.900-0.800-1.900-1.900-0.800 1.900-0.800z" fill="#222"/></svg>
  <div id="sidebar" class="abs">
    <div class="abs circ" style="left:4.700px;top:4.300px;width:19.400px;height:19.400px;background:#616161"></div>
    <div class="abs circ" style="left:4.700px;top:31.300px;width:19.400px;height:19.400px;background:#616161"></div>
    <div class="abs circ" style="left:4.700px;top:58.600px;width:19.400px;height:19.400px;background:#616161"></div>
    <!-- calendar -->
    <svg class="abs" style="left:10.500px;top:10px" width="7.800" height="8" viewBox="0 0 7.800 8"><rect x="0" y="0" width="7.800" height="8" rx="0.500" fill="#3f7ff0"/><rect x="0" y="0" width="7.800" height="1.500" fill="#e9eef8"/><text x="3.900" y="6.600" font-size="4.800" font-weight="bold" text-anchor="middle" fill="#9cc0ff" font-family="Liberation Sans, sans-serif">31</text></svg>
    <!-- keep -->
    <svg class="abs" style="left:10.200px;top:36.600px" width="8.600" height="9.200" viewBox="0 0 8.600 9.200"><path d="M0.600 0h7.400a0.600 0.600 0 0 1 0.600 0.600V6.600L6 9.200H0.600A0.600 0.600 0 0 1 0 8.600V0.600A0.600 0.600 0 0 1 0.600 0z" fill="#f5b400"/><path d="M8.600 6.600L6 9.200V7.200a0.600 0.600 0 0 1 0.600-0.600z" fill="#c98f00"/><circle cx="4.300" cy="3.700" r="1.900" fill="none" stroke="#fbd66b" stroke-width="0.800"/><rect x="3.500" y="5.900" width="1.600" height="1.300" fill="#fbd66b"/></svg>
    <!-- tasks -->
    <svg class="abs" style="left:9.700px;top:63.600px" width="9.400" height="9.400" viewBox="0 0 9.400 9.400"><circle cx="4.700" cy="4.700" r="4.700" fill="#3b82f6"/><path d="M3.300 5.600l1.200 1.200 3.200-3.700" fill="none" stroke="#fff" stroke-width="1.400" stroke-linecap="round"/><circle cx="2.400" cy="4.700" r="0.800" fill="#f6c333"/></svg>
    <!-- collapse circle -->
    <div class="abs circ" style="left:4.100px;top:353.200px;width:19.200px;height:19.200px;background:#616161"></div>
    <svg class="abs" style="left:11.500px;top:359.800px" width="4.500" height="6" viewBox="0 0 4.500 6"><path d="M1 0.600l2.500 2.400-2.500 2.400" fill="none" stroke="#686868" stroke-width="0.900"/></svg>
  </div>
  <div id="orange" class="abs"></div>
</div>
</body>
</html>
